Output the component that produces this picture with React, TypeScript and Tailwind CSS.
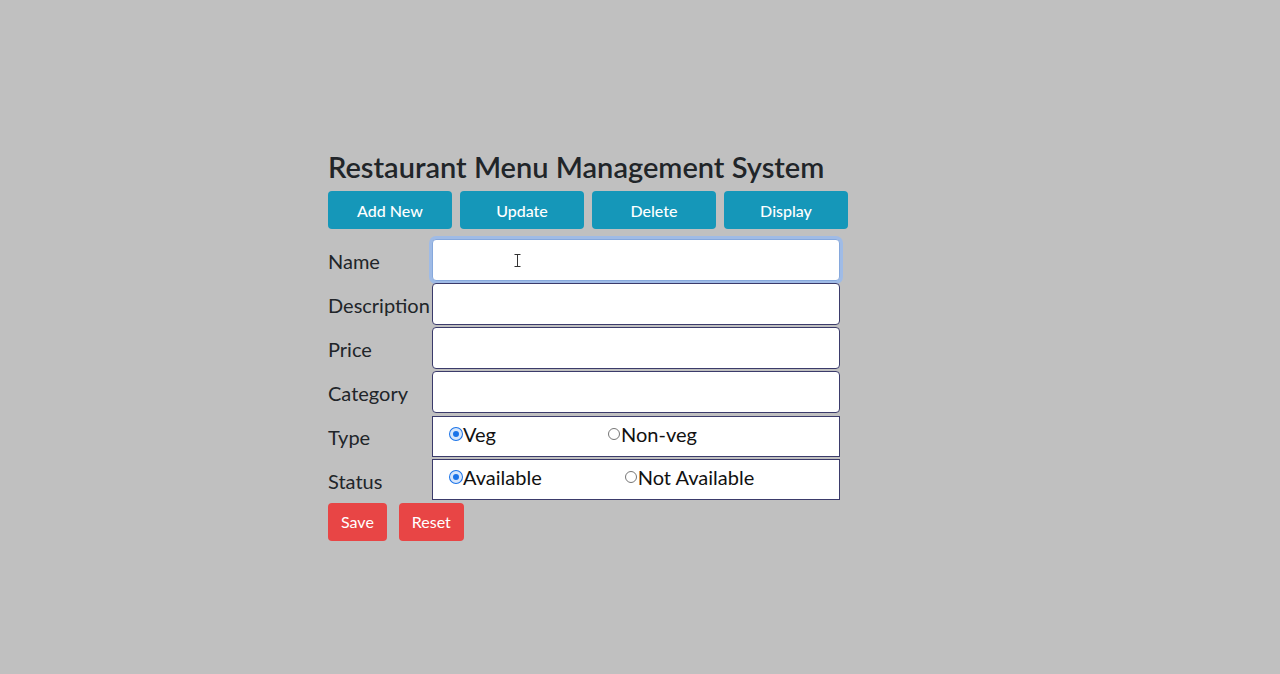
import React from "react";

const font = { fontFamily: 'Lato, "Noto Sans", sans-serif' };

const Field: React.FC<{ label: string; focused?: boolean }> = ({ label, focused }) => (
  <div className="flex items-center h-[44px]">
    <label className="w-[104px] text-[20px] text-[#212529] pt-[2px]">{label}</label>
    <div className="relative">
      <input
        className={
          focused
            ? "w-[408px] h-[42px] bg-white rounded-[4px] border border-[#86a8dc] outline-none ring-[3px] ring-[#9fbbe6]"
            : "w-[408px] h-[42px] bg-white rounded-[4px] border border-[#3b3b6b] outline-none"
        }
      />
      {focused && (
        <svg className="absolute left-[82px] top-[15px]" width="7" height="13" viewBox="0 0 7 13">
          <path d="M0.5 0.5h6M0.5 12.5h6M3.5 0.5v12" stroke="#333" strokeWidth="1" fill="none" />
        </svg>
      )}
    </div>
  </div>
);

const Radio: React.FC<{ checked?: boolean }> = ({ checked }) =>
  checked ? (
    <span className="inline-block w-[12px] h-[12px] rounded-full bg-[#1a73e8] border-[3px] border-[#d7e6fb] ring-1 ring-[#1a73e8]" />
  ) : (
    <span className="inline-block w-[12px] h-[12px] rounded-full bg-white border border-[#767676]" />
  );

export default function App() {
  return (
    <div className="min-h-[674px] bg-[#c0c0c0] pt-[148px] pl-[328px]" style={font}>
      <div className="w-[520px]">
        <h1 className="text-[29px] font-semibold text-[#212529] leading-[38px] whitespace-nowrap">
          Restaurant Menu Management System
        </h1>
        <div className="grid grid-cols-4 gap-2 mt-[5px]">
          {["Add New", "Update", "Delete", "Display"].map((b) => (
            <button
              key={b}
              className="h-[38px] rounded-[4px] bg-[#1597b9] text-white text-[16px] font-medium pt-[1px]"
            >
              {b}
            </button>
          ))}
        </div>
        <div className="mt-[9px] flex flex-col">
          <Field label="Name" focused />
          <Field label="Description" />
          <Field label="Price" />
          <Field label="Category" />
          <div className="flex items-center h-[44px]">
            <span className="w-[104px] text-[20px] text-[#212529] pt-[2px]">Type</span>
            <div className="w-[408px] h-[41px] bg-white border border-[#3b3b6b] flex items-start pt-[2px] pl-[17px] text-[20px] text-[#111]">
              <label className="flex items-center gap-[1px]">
                <Radio checked />
                Veg
              </label>
              <label className="flex items-center gap-[1px] ml-[112px]">
                <Radio />
                Non-veg
              </label>
            </div>
          </div>
          <div className="flex items-center h-[43px]">
            <span className="w-[104px] text-[20px] text-[#212529] pt-[2px]">Status</span>
            <div className="w-[408px] h-[41px] bg-white border border-[#3b3b6b] flex items-start pt-[2px] pl-[17px] text-[20px] text-[#111]">
              <label className="flex items-center gap-[1px]">
                <Radio checked />
                Available
              </label>
              <label className="flex items-center gap-[1px] ml-[83px]">
                <Radio />
                Not Available
              </label>
            </div>
          </div>
        </div>
        <div className="flex gap-3 mt-[2px]">
          <button className="h-[38px] px-[13px] rounded-[4px] bg-[#e84545] text-white text-[16px]">
            Save
          </button>
          <button className="h-[38px] px-[13px] rounded-[4px] bg-[#e84545] text-white text-[16px]">
            Reset
          </button>
        </div>
      </div>
    </div>
  );
}
